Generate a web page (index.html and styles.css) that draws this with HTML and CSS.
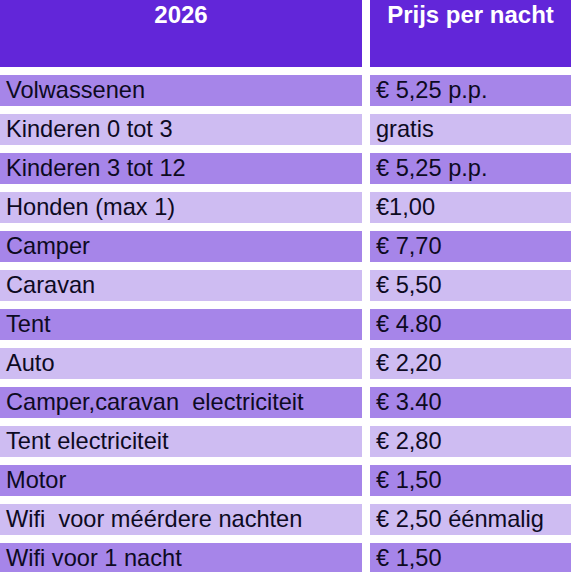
FILE: index.html
```html
<!DOCTYPE html>
<html lang="nl">
<head>
<meta charset="utf-8">
<title>Tarieven 2026</title>
<link rel="stylesheet" href="styles.css">
</head>
<body>
<div class="prices">
  <div class="head">2026</div>
  <div class="head">Prijs per nacht</div>

  <div class="cell dark">Volwassenen</div><div class="cell dark">€ 5,25 p.p.</div>
  <div class="cell light">Kinderen 0 tot 3</div><div class="cell light">gratis</div>
  <div class="cell dark">Kinderen 3 tot 12</div><div class="cell dark">€ 5,25 p.p.</div>
  <div class="cell light">Honden (max 1)</div><div class="cell light">€1,00</div>
  <div class="cell dark">Camper</div><div class="cell dark">€ 7,70</div>
  <div class="cell light">Caravan</div><div class="cell light">€ 5,50</div>
  <div class="cell dark">Tent</div><div class="cell dark">€ 4.80</div>
  <div class="cell light">Auto</div><div class="cell light">€ 2,20</div>
  <div class="cell dark">Camper,caravan&nbsp; electriciteit</div><div class="cell dark">€ 3.40</div>
  <div class="cell light">Tent electriciteit</div><div class="cell light">€ 2,80</div>
  <div class="cell dark">Motor</div><div class="cell dark">€ 1,50</div>
  <div class="cell light">Wifi&nbsp; voor méérdere nachten</div><div class="cell light">€ 2,50 éénmalig</div>
  <div class="cell dark">Wifi voor 1 nacht</div><div class="cell dark">€ 1,50</div>
</div>
</body>
</html>
```
FILE: styles.css
```css
html, body {
  margin: 0;
  padding: 0;
  background: #ffffff;
}

.prices {
  display: grid;
  grid-template-columns: 362px 201px;
  column-gap: 8px;
  row-gap: 8px;
  font-family: "Liberation Sans", Arial, sans-serif;
}

.head {
  height: 67px;
  background: #6226d9;
  color: #ffffff;
  font-weight: bold;
  font-size: 24px;
  line-height: 30px;
  text-align: center;
  box-sizing: border-box;
  padding-top: 0;
}

.cell {
  height: 31px;
  line-height: 31px;
  font-size: 23.6px;
  color: #0d0a22;
  padding-left: 6px;
  white-space: nowrap;
  overflow: hidden;
}

.dark {
  background: #a685e9;
}

.light {
  background: #cebcf2;
}
```
